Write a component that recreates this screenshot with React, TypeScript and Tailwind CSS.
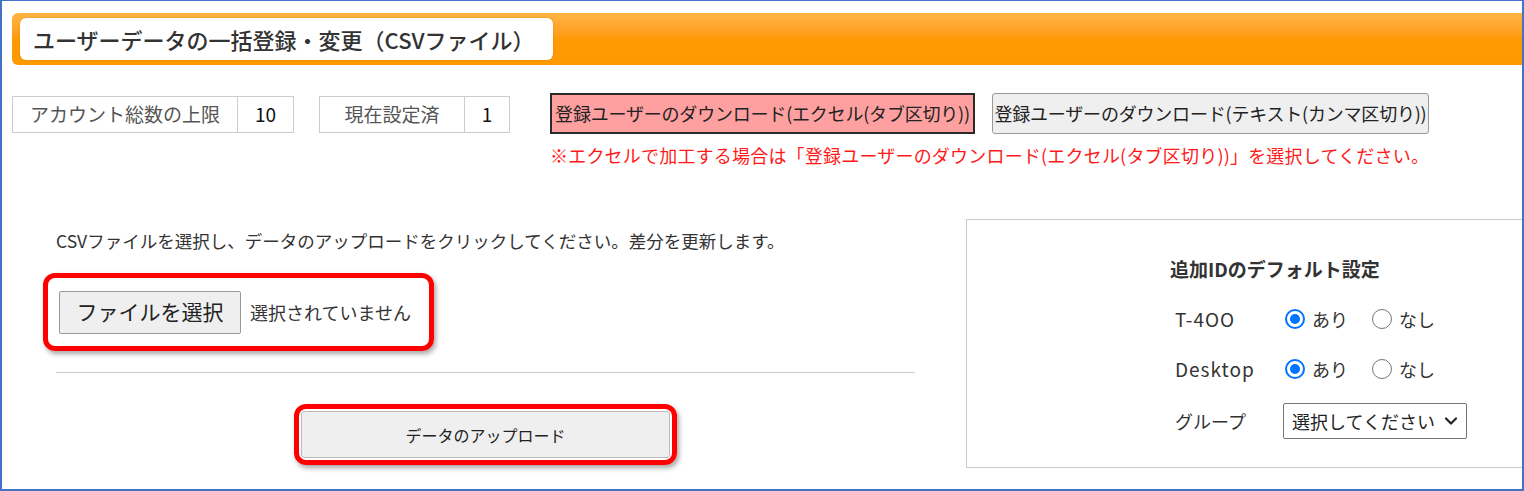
import { useState } from 'react'

const JP = "font-['Noto_Sans_CJK_JP','Noto_Sans',sans-serif]"

function Radio({ checked, label, onClick }: { checked: boolean; label: string; onClick: () => void }) {
  return (
    <button type="button" onClick={onClick} className="flex items-center gap-[7px] text-[18px] text-[#333]">
      {checked ? (
        <span className="w-[20px] h-[20px] rounded-full border-2 border-[#0075ff] flex items-center justify-center">
          <span className="w-[10px] h-[10px] rounded-full bg-[#0075ff]" />
        </span>
      ) : (
        <span className="w-[20px] h-[20px] rounded-full border-[1.5px] border-[#767676] bg-white" />
      )}
      <span>{label}</span>
    </button>
  )
}

export default function App() {
  const [t400, setT400] = useState(true)
  const [desktop, setDesktop] = useState(true)

  return (
    <div className={`${JP} w-full h-[491px] bg-white overflow-hidden border-t border-l-2 border-r-2 border-b-2 border-[#4472c4] text-[#333]`}>
      {/* Header */}
      <div className="ml-[10px] mt-[12px] h-[52px] rounded-l-md bg-gradient-to-b from-[#ffb444] via-[#ff9a05] to-[#ff9900] flex items-center pl-[8px]">
        <div className="w-[533px] h-[42px] bg-white rounded-md shadow-[0_0_2px_rgba(0,0,0,0.15)] flex items-center pl-[13px] text-[22px] font-medium text-[#333]">
          ユーザーデータの一括登録・変更（CSVファイル）
        </div>
      </div>

      {/* Info + download */}
      <div className="flex items-start ml-[10px] mt-[28px]">
        <div className="mt-[3px] flex h-[37px] border border-[#ccc] text-[19px]">
          <div className="w-[225px] flex items-center justify-center text-[#555] border-r border-[#ccc]">アカウント総数の上限</div>
          <div className="w-[55px] flex items-center justify-center text-[#111]">10</div>
        </div>
        <div className="ml-[25px] mt-[3px] flex h-[37px] border border-[#ccc] text-[19px]">
          <div className="w-[145px] flex items-center justify-center text-[#555] border-r border-[#ccc]">現在設定済</div>
          <div className="w-[44px] flex items-center justify-center text-[#111]">1</div>
        </div>
        <div className="ml-[40px] flex flex-col">
          <div className="flex items-center">
            <button className="w-[425px] h-[41px] bg-[#ffa0a0] border-2 border-[#2a2a2a] text-[18px] text-[#222] tracking-[-0.2px]">
              登録ユーザーのダウンロード(エクセル(タブ区切り))
            </button>
            <button className="ml-[17px] w-[437px] h-[41px] bg-[#efefef] border border-[#999] rounded-[3px] text-[18px] text-[#222] tracking-[-0.2px]">
              登録ユーザーのダウンロード(テキスト(カンマ区切り))
            </button>
          </div>
          <div className="mt-[8px] text-[18px] text-[#ff1a1a] tracking-[0.2px] leading-[26px]">
            ※エクセルで加工する場合は「登録ユーザーのダウンロード(エクセル(タブ区切り))」を選択してください。
          </div>
        </div>
      </div>

      {/* Main */}
      <div className="flex mt-[51px]">
        <div className="ml-[54px] w-[859px] shrink-0 pt-[10px]">
          <p className="text-[17.5px] leading-[24px] text-[#333]">
            CSVファイルを選択し、データのアップロードをクリックしてください。差分を更新します。
          </p>
          <div className="-ml-[13px] mt-[20px] w-[391px] h-[78px] border-[5px] border-[#ff0000] rounded-[12px] shadow-[2px_3px_5px_rgba(0,0,0,0.35)] flex items-center pl-[11px]">
            <button className="w-[182px] h-[43px] bg-[#efefef] border border-[#999] rounded-[2px] text-[21px] text-[#222]">
              ファイルを選択
            </button>
            <span className="ml-[9px] text-[18px] text-[#333]">選択されていません</span>
          </div>
          <div className="mt-[21px] h-px bg-[#ccc]" />
          <div className="ml-[238px] mt-[31px] w-[383px] h-[61px] border-[5px] border-[#ff0000] rounded-[12px] shadow-[2px_3px_5px_rgba(0,0,0,0.35)] p-[2px]">
            <button className="w-full h-full bg-[#efefef] border border-[#bbb] rounded-[3px] text-[16px] text-[#222]">
              データのアップロード
            </button>
          </div>
        </div>

        <div className="ml-[51px] w-[580px] h-[249px] shrink-0 border border-[#ccc] pl-[203px] pt-[36px]">
          <div className="text-[19px] font-bold text-[#333] leading-[26px]">追加IDのデフォルト設定</div>
          <div className="ml-[5px] mt-[12px] flex flex-col">
            <div className="flex items-center h-[50px]">
              <span className="w-[110px] text-[19px] tracking-[1px] text-[#333]">T-4OO</span>
              <div className="flex items-center gap-[24px]">
                <Radio checked={t400} label="あり" onClick={() => setT400(true)} />
                <Radio checked={!t400} label="なし" onClick={() => setT400(false)} />
              </div>
            </div>
            <div className="flex items-center h-[50px]">
              <span className="w-[110px] text-[19px] tracking-[1px] text-[#333]">Desktop</span>
              <div className="flex items-center gap-[24px]">
                <Radio checked={desktop} label="あり" onClick={() => setDesktop(true)} />
                <Radio checked={!desktop} label="なし" onClick={() => setDesktop(false)} />
              </div>
            </div>
            <div className="flex items-center h-[54px]">
              <span className="w-[108px] text-[18px] text-[#333]">グループ</span>
              <div className="w-[184px] h-[36px] border border-[#767676] rounded-[2px] bg-white flex items-center pl-[8px] pr-[8px] justify-between">
                <span className="text-[18px] text-[#222]">選択してください</span>
                <svg width="14" height="10" viewBox="0 0 14 10" fill="none">
                  <path d="M2 2.5 L7 7.5 L12 2.5" stroke="#222" strokeWidth="2.2" strokeLinecap="round" strokeLinejoin="round" />
                </svg>
              </div>
            </div>
          </div>
        </div>
      </div>
    </div>
  )
}
